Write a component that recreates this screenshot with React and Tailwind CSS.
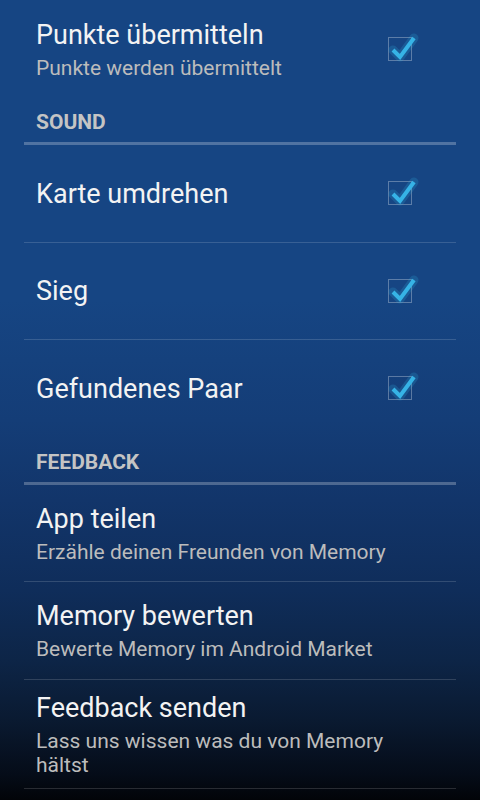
import React from 'react';

const sections = [
    { type: 'pref', title: 'Punkte übermitteln', summary: 'Punkte werden übermittelt', checked: true },
    { type: 'header', title: 'SOUND' },
    { type: 'pref', title: 'Karte umdrehen', checked: true },
    { type: 'pref', title: 'Sieg', checked: true },
    { type: 'pref', title: 'Gefundenes Paar', checked: true },
    { type: 'header', title: 'FEEDBACK' },
    { type: 'pref', title: 'App teilen', summary: 'Erzähle deinen Freunden von Memory' },
    { type: 'pref', title: 'Memory bewerten', summary: 'Bewerte Memory im Android Market' },
    { type: 'pref', title: 'Feedback senden', summary: 'Lass uns wissen was du von Memory hältst' },
];

function CheckBox() {
    return (
        <div className="relative w-[24px] h-[24px] border border-white/30 shrink-0 mr-[44px]">
            <svg className="absolute -left-[1px] -top-[5px] overflow-visible" width="30" height="30" viewBox="0 0 30 30">
                {/* soft glow round the tick */}
                <path d="M5 17 L12 24 L26 5" fill="none" stroke="#33b5e5" strokeOpacity="0.2" strokeWidth="9" strokeLinecap="round" strokeLinejoin="round" />
                <path d="M5 17 L12 24 L26 5" fill="none" stroke="#36b3e6" strokeWidth="4" strokeLinejoin="miter" />
            </svg>
        </div>
    );
}

function PrefRow({ title, summary, checked }) {
    return (
        <div className="flex items-center min-h-[96.5px] pl-3 py-[10px]">
            <div className="flex-1 min-w-0 pt-[2px] pb-[1px]">
                <p className="text-[27px] leading-[32px] text-[#f3f3f3]">{title}</p>
                {summary && (
                    <p className="mt-[5px] max-w-[372px] text-[21px] leading-[24px] text-[#bcbcbc]">{summary}</p>
                )}
            </div>
            {checked && <CheckBox />}
        </div>
    );
}

function Header({ title }) {
    return (
        <div className="h-[48px] flex flex-col">
            <p className="pt-[13px] pl-3 text-[21px] leading-[24px] font-bold text-[#c4c4c4]">{title}</p>
            <div className="mt-auto h-[3px] bg-white/25" />
        </div>
    );
}

export default function App() {
    return (
        <div className="w-[480px] h-[800px] overflow-hidden font-['Roboto','Liberation_Sans',sans-serif] bg-[linear-gradient(to_bottom,#164583_0px,#164583_300px,#143d77_420px,#12356a_500px,#0f2d5a_590px,#0d2547_660px,#0a1a31_720px,#050c18_775px,#020408_800px)]">
            <div className="px-6 pt-[0.5px]">
                {sections.map((s, i) => {
                    if (s.type === 'header') return <Header key={i} title={s.title} />;
                    const next = sections[i + 1];
                    return (
                        <div key={i}>
                            <PrefRow title={s.title} summary={s.summary} checked={s.checked} />
                            {(!next || next.type !== 'header') && <div className="h-[1px] bg-white/15" />}
                        </div>
                    );
                })}
            </div>
        </div>
    );
}
